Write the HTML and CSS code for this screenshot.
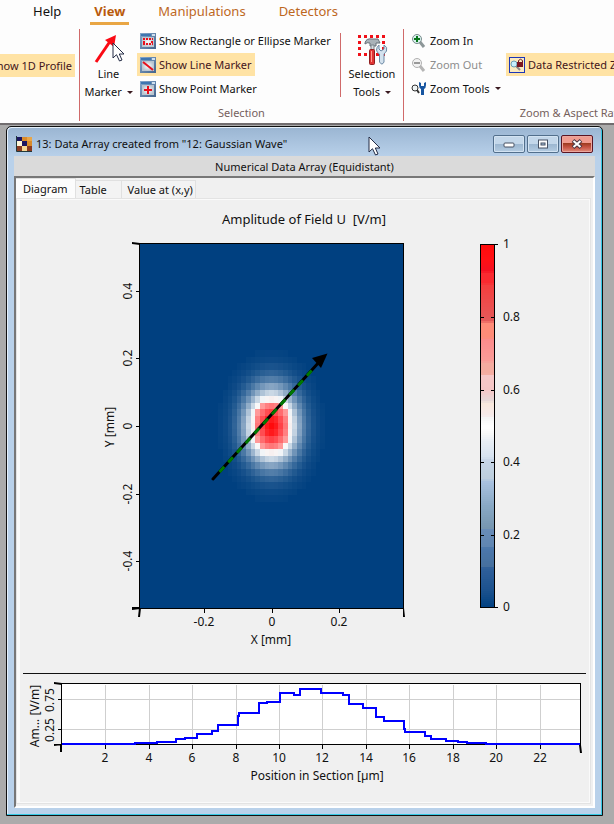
FILE: index.html
```html
<!DOCTYPE html>
<html lang="en">
<head>
<meta charset="utf-8">
<title>Data Array</title>
<link rel="stylesheet" href="styles.css">
</head>
<body>
<svg class="defs" aria-hidden="true">
  <defs>
    <linearGradient id="frame" x1="0" y1="0" x2="1" y2="1"><stop offset="0" stop-color="#86a8cc"/><stop offset="1" stop-color="#44648c"/></linearGradient>
    <radialGradient id="sheet"><stop offset="0" stop-color="#fff"/><stop offset="1" stop-color="#b9c4cf"/></radialGradient>
    <symbol id="pointer" viewBox="0 0 14 20"><path d="M1 1V16L4.5 12.7L7.5 19L10 18L7.3 12H12Z" fill="#fff" stroke="#222a44"/></symbol>
    <symbol id="marker-frame" viewBox="0 0 16 16"><rect width="16" height="16" fill="url(#frame)"/><rect x="1" y="1" width="10" height="2" fill="#3f76b0"/><rect x="12" y="1" width="3" height="2" fill="#cfe0f0"/><rect x="2" y="4" width="12" height="10" fill="url(#sheet)"/></symbol>
  </defs>
</svg>

<header class="ribbon">
  <nav class="tabs-bar">
    <a class="rtab help" href="#">Help</a>
    <a class="rtab active" href="#">View</a>
    <a class="rtab" href="#">Manipulations</a>
    <a class="rtab" href="#">Detectors</a>
  </nav>
  <div class="groups">
    <section class="group profile">
      <button class="cmd on">Show 1D Profile</button>
    </section>
    <section class="group selection">
      <div class="group-body">
        <button class="big line">
          <svg width="34" height="32" viewBox="0 0 34 32"><path d="M4 29L19 7" stroke="#fa0a14" stroke-width="3"/><path d="M13 7L24 2L22 14Z" fill="#fa0a14"/><use href="#pointer" x="20" y="9" width="14" height="20"/></svg>
          <span>Line<br>Marker <i class="caret"></i></span>
        </button>
        <div class="rows">
          <button class="cmd"><svg width="16" height="16"><use href="#marker-frame"/><path d="M3 6H13M3 11H13" stroke="#e8101c" stroke-width="2" stroke-dasharray="2 1"/><path d="M4 8V10M12 8V10" stroke="#e8101c" stroke-width="2"/></svg>Show Rectangle or Ellipse Marker</button>
          <button class="cmd on"><svg width="16" height="16"><use href="#marker-frame"/><path d="M3 5L13 13" stroke="#e8101c" stroke-width="2"/></svg>Show Line Marker</button>
          <button class="cmd"><svg width="16" height="16"><use href="#marker-frame"/><path d="M8 5V13M4 9H12" stroke="#e8101c" stroke-width="2"/></svg>Show Point Marker</button>
        </div>
        <button class="big tools">
          <svg width="34" height="32" viewBox="0 0 34 32"><path d="M3 3.500H31M3 21.500H31" stroke="#f01018" stroke-width="3" stroke-dasharray="3 3"/><path d="M4.500 8V20M28.500 8V20" stroke="#f01018" stroke-width="3" stroke-dasharray="3 3"/><path d="M10 10Q11 5 17 6L23 6L25 10L21 10V13H15V10Q12 9 10 11Z" fill="#a9b2b8" stroke="#667078"/><path d="M16 12H19V17H16Z" fill="#d5dce0" stroke="#78828a"/><rect x="14.500" y="16.500" width="5" height="15" rx="1" fill="#e03434" stroke="#8e1f20"/><path d="M16.500 18V29" stroke="#ff9c90"/><path d="M24 12V16L26 18L29 16V12Q33 14 31.500 18Q30 20 29 21V29Q27 33 24.500 29V21Q22 20 21.500 17Q21.500 14 24 12Z" fill="#d4e2ee" stroke="#6d8aa5"/></svg>
          <span>Selection<br>Tools <i class="caret"></i></span>
        </button>
      </div>
      <h2>Selection</h2>
    </section>
    <section class="group zoom">
      <div class="group-body">
        <div class="rows">
          <button class="cmd"><svg width="16" height="16"><circle cx="6" cy="6" r="4.500" fill="#d8f2ee" stroke="#7b8c8d"/><path d="M9 9L13 14" stroke="#8c9698" stroke-width="3"/><path d="M6 3V9M3 6H9" stroke="#08751b" stroke-width="2"/></svg>Zoom In</button>
          <button class="cmd" disabled><svg width="16" height="16"><circle cx="6" cy="6" r="4.500" fill="#f2f2f2" stroke="#b0b0b0"/><path d="M9 9L13 14" stroke="#b5b5b5" stroke-width="3"/><path d="M3 6H9" stroke="#999" stroke-width="2"/></svg>Zoom Out</button>
          <button class="cmd"><svg width="16" height="16"><circle cx="4" cy="7" r="3" fill="#eef4f4" stroke="#333"/><path d="M6 9L8 12" stroke="#333" stroke-width="2"/><path d="M8 1V4Q8 7 10 8V14H13V8Q15 7 15 4V1L13 2V5H10V2Z" fill="#1755a0"/></svg>Zoom Tools <i class="caret"></i></button>
        </div>
        <button class="cmd on restrict"><svg width="16" height="16"><rect x=".5" y=".5" width="15" height="15" fill="#fbeac0" stroke="#1c36b8"/><circle cx="5" cy="7" r="3" fill="#c8f0ff" stroke="#6a9db5"/><path d="M7 9L11 13" stroke="#888" stroke-width="2"/><path d="M9.500 6V3.500Q11.500 1 13.500 3.500V6" fill="none" stroke="#6a1820"/><rect x="8" y="5" width="6" height="5" fill="#7a1520"/></svg>Data Restricted Zoom</button>
      </div>
      <h2>Zoom &amp; Aspect Ratio</h2>
    </section>
  </div>
</header>

<main class="window">
  <div class="titlebar">
    <svg width="16" height="16" viewBox="0 0 16 16"><rect x="1" y="1" width="15" height="14" fill="#fff6d8"/><path d="M1 1H6V5H1ZM6 5H11V10H6Z" fill="#1c1660"/><path d="M6 1H11V5H6ZM11 5H16V10H11Z" fill="#d98b2b"/><path d="M11 1H16V5H11Z" fill="#e9a648"/><path d="M1 10H6V15H1ZM11 10H16V15H11Z" fill="#8b3a20"/><path d="M6 10H11V15H6Z" fill="#f5d795"/><path d="M.5 0V15.500H16" fill="none" stroke="#22383a"/></svg>
    <h1>13: Data Array created from "12: Gaussian Wave"</h1>
    <svg class="cursor" width="14" height="20"><use href="#pointer"/></svg>
    <div class="caption">
      <button aria-label="Minimize"><svg width="12" height="10"><rect x="1" y="4" width="10" height="4" rx="1" fill="#fff" stroke="#465163"/></svg></button>
      <button aria-label="Restore"><svg width="12" height="10"><rect x="1.500" y="1" width="9" height="8" fill="#fff" stroke="#465163"/><rect x="4" y="4" width="4" height="2" fill="#a9c4dd" stroke="#465163"/></svg></button>
      <button class="close" aria-label="Close"><svg width="12" height="10"><path d="M2 1.500L10 8.500M10 1.500L2 8.500" stroke="#4a3642" stroke-width="4"/><path d="M2.500 2L9.500 8M9.500 2L2.500 8" stroke="#fff" stroke-width="2"/></svg></button>
    </div>
  </div>
  <div class="subtitle">Numerical Data Array (Equidistant)</div>
  <div class="tabview">
    <div class="tabs" role="tablist">
      <button class="tab current" role="tab">Diagram</button>
      <button class="tab" role="tab">Table</button>
      <button class="tab value" role="tab">Value at (x,y)</button>
    </div>
    <div class="panel">
      <svg class="chart" viewBox="20 200 569 473" role="img" aria-label="Amplitude of Field U">
        <text class="chart-title" x="304" y="224" xml:space="preserve">Amplitude of Field U  [V/m]</text>
        <rect x="139" y="243" width="265" height="365" fill="#004080"/>
        <g id="field" shape-rendering="crispEdges"></g>
        <rect class="axis" x="139.500" y="243.500" width="264" height="365"/>
        <g id="field-axes"></g>
        <path d="M132 242L140 243V245L132 244ZM132 607H140V609L132 610ZM139 608H141L140 617H138ZM403 608H404L405 617H403Z"/>
        <text class="mid" x="271" y="644">X [mm]</text>
        <text class="mid" transform="translate(114 427) rotate(-90)">Y [mm]</text>
        <path d="M213 479L320 361" stroke="#000" stroke-width="3" stroke-linecap="round"/>
        <path d="M219.500 472L314 368" stroke="#007800" stroke-width="3" stroke-dasharray="7 6"/>
        <path d="M327.500 353.500L312 358L321 368Z"/>
        <g id="scale" shape-rendering="crispEdges"></g>
        <path class="axis" d="M498 244.500H480.500V607.500H498M494.500 244V608"/>
        <g id="scale-axis"></g>
      </svg>
      <hr>
      <svg class="chart" viewBox="20 674 569 128" role="img" aria-label="Profile along the line marker">
        <rect x="62" y="684" width="519" height="60" fill="#fff"/>
        <g id="profile-axes"></g>
        <path class="axis" d="M61.500 744.500V683.500H580.500V744.500Z"/>
        <path class="curve" d="M62 744H135V743H157V742H176V739H185V738H197V734H212V731H218V725H238V716H239V713H259V703H267V702H280V693H294V695H300V689H321V693H343V695H349V704H363V708H376V717H384V721H404V729H405V732H425V736H431V739H446V741H458V742H467V743H486V744H580"/>
        <path d="M54 682L62 683V685L54 684ZM54 744H62V745L54 746ZM60 745H62V752H60ZM579 745H581L582 753H580Z"/>
        <text class="mid" x="317" y="780">Position in Section [µm]</text>
        <text class="mid" transform="translate(39 716) rotate(-90)">Am... [V/m]</text>
      </svg>
    </div>
  </div>
</main>
<script src="script.js"></script>
</body>
</html>
```
FILE: styles.css
```css
* { box-sizing: border-box; }
body {
  margin: 0;
  min-height: 100vh;
  display: flex;
  flex-direction: column;
  background: #ababab;
  color: #111;
  font: 11px/16px "Noto Sans", "Open Sans", sans-serif;
}
button { font: inherit; color: inherit; border: 0; padding: 0; background: none; }
h1, h2 { margin: 0; font-size: 11px; font-weight: 400; }
svg { flex: none; }
.defs { position: absolute; width: 0; height: 0; }

.ribbon { background: #fdfdfd; border-bottom: 2px solid #716d6f; overflow: hidden; }
.tabs-bar { display: flex; height: 25px; padding-left: 29px; gap: 25px; font-size: 13px; }
.rtab { color: #bd681e; text-decoration: none; line-height: 22px; padding: 0 4px; }
.rtab.help { color: #111; }
.rtab.active { font-weight: 700; color: #b95a0c; border-bottom: 3px solid #e9a644; }
.groups { display: grid; grid-template-columns: 80px 324px 340px; height: 98px; padding: 4px 0; }
.group { display: flex; flex-direction: column; min-width: 0; border-right: 1px solid #d06a6a; }
.group h2 { text-align: center; color: #75605c; }
.group-body { display: flex; height: 76px; }
.profile { align-items: flex-end; padding: 25px 4px 0 0; overflow: hidden; }
.profile .cmd { padding-right: 3px; }
.cmd { display: flex; align-items: center; gap: 3px; height: 23px; padding: 0 3px; white-space: nowrap; }
.cmd.on { background: #ffe3a5; color: #43151c; }
.cmd:disabled { color: #8d8d8d; }
.rows { display: flex; flex-direction: column; align-items: flex-start; gap: 1px; }
.big { display: flex; flex-direction: column; align-items: center; padding-top: 4px; line-height: 18px; white-space: nowrap; }
.big.line { width: 57px; }
.big.tools { flex: 1; height: 64px; margin-top: 4px; padding-top: 0; border-left: 1px solid #d06a6a; }
.selection .rows { width: 203px; }
.caret { display: inline-block; margin-left: 2px; vertical-align: 2px; border: 3px solid transparent; border-top-color: #3a1a20; border-bottom: 0; }
.zoom .rows { width: 95px; padding-left: 4px; }
.restrict { margin-top: 24px; margin-left: 7px; flex: 1; }

.window {
  flex: 1;
  display: flex;
  flex-direction: column;
  margin: 1px 11px 8px 6px;
  padding: 0 7px 7px;
  border: 1px solid #111;
  border-radius: 5px 5px 0 0;
  background: linear-gradient(#9ab5d2, #b9d1ea 30px);
  box-shadow: inset -1px -1px #35c9e4, inset 1px 1px #e6f1fb;
}
.titlebar { position: relative; display: flex; align-items: center; gap: 4px; height: 29px; padding: 5px 2px 0; }
.titlebar h1 { flex: 1; white-space: nowrap; }
.cursor { position: absolute; left: 61%; top: 9px; }
.caption { display: flex; gap: 2px; align-self: center; }
.caption button {
  display: grid;
  place-items: center;
  width: 32px;
  height: 18px;
  border: 1px solid #526f8c;
  border-radius: 2px;
  background: linear-gradient(#c3d7ea 50%, #9bb6d0 50%, #b4cce2);
  box-shadow: inset 0 0 0 1px #d3e3f2;
}
.caption .close { border-color: #5b1422; background: linear-gradient(#f09c90 45%, #9b3a1e 45%, #c75444 70%, #e08c7c); box-shadow: inset 0 0 0 1px #eba79e; }
.subtitle { height: 20px; padding-top: 3px; background: #dadada; text-align: center; }
.tabview {
  flex: 1;
  display: flex;
  flex-direction: column;
  padding: 0 2px 2px 0;
  background: #f0f0f0;
  border: 2px solid;
  border-color: #777 #fff #fff #777;
}
.tabs { display: flex; align-items: flex-end; height: 20px; }
.tab { height: 18px; padding: 0 4px; border: 1px solid #e0e0e0; border-width: 1px 1px 0 0; text-align: left; line-height: 18px; background: #f3f3f3; min-width: 46px; }
.tab.current { height: 20px; min-width: 58px; padding: 0 7px; line-height: 19px; background: #fcfcfc; }
.tab.value { padding: 0 2px 0 6px; }
.panel { flex: 1; background: #f0f0f0; border: solid #fafafa; border-width: 2px 2px 2px 4px; outline: 1px solid #e3e3e3; outline-offset: -1px; }
.panel hr { height: 1px; margin: 0 3px; border: 0; background: #111; }

.chart { display: block; width: 100%; height: auto; }
.chart text { fill: #111; font-size: 12px; }
.chart .chart-title { font-size: 13px; text-anchor: middle; white-space: pre; }
.chart .tick { font-size: 12px; }
.chart .mid { text-anchor: middle; }
.axis { fill: none; stroke: #000; shape-rendering: crispEdges; }
.grid { stroke: #cfcfcf; shape-rendering: crispEdges; }
.curve { fill: none; stroke: #00f; stroke-width: 2; shape-rendering: crispEdges; }
```
FILE: script.js
```js
const NS = 'http://www.w3.org/2000/svg';
const stops = [
  [0, 0, 64, 128], [.05, 28, 82, 142], [.11, 48, 96, 154], [.115, 70, 112, 158], [.165, 76, 120, 172],
  [.17, 96, 134, 178], [.215, 104, 140, 184], [.22, 118, 150, 176], [.28, 136, 168, 196], [.35, 170, 194, 224],
  [.355, 188, 206, 220], [.41, 200, 214, 232], [.415, 214, 226, 240], [.46, 232, 238, 244], [.48, 248, 248, 248],
  [.5, 255, 255, 255], [.525, 244, 244, 244], [.53, 246, 234, 234], [.565, 248, 232, 220], [.57, 230, 216, 216],
  [.6, 244, 198, 198], [.64, 246, 200, 200], [.645, 244, 172, 160], [.675, 244, 172, 160], [.68, 250, 156, 152],
  [.74, 252, 140, 140], [.745, 255, 140, 120], [.785, 255, 140, 120], [.79, 228, 90, 90], [.89, 244, 62, 62],
  [.895, 250, 42, 48], [.92, 250, 42, 48], [.93, 245, 16, 32], [.96, 255, 16, 20], [1, 255, 12, 12]
];
const fieldStops = [
  [0, 0, 64, 128], [.46, 235, 240, 245], [.5, 250, 250, 250], [.6, 245, 232, 232], [.61, 255, 156, 156], [.85, 255, 70, 76], [1, 255, 10, 12]
];

function colour(v, table) {
  const i = Math.max(1, table.findIndex(s => s[0] >= v));
  const a = table[i - 1], b = table[i];
  const t = (v - a[0]) / (b[0] - a[0]);
  return `rgb(${[1, 2, 3].map(k => Math.round(a[k] + (b[k] - a[k]) * t)).join()})`;
}

function add(parent, tag, attrs, text) {
  const el = document.createElementNS(NS, tag);
  for (const k in attrs) el.setAttribute(k, attrs[k]);
  if (text !== undefined) el.textContent = text;
  document.getElementById(parent).append(el);
}

// Gaussian amplitude on the sampling grid
const cw = 264 / 57, ch = 364 / 55;
for (let r = -12; r <= 12; r++) {
  for (let c = -12; c <= 12; c++) {
    const v = Math.exp(-(r * r + c * c) / 27);
    if (v < .008) continue;
    const x = Math.round(271.5 + (c - .5) * cw), y = Math.round(426 + (r - .5) * ch);
    const x2 = Math.round(271.5 + (c + .5) * cw), y2 = Math.round(426 + (r + .5) * ch);
    add('field', 'rect', { x, y, width: x2 - x, height: y2 - y, fill: colour(v, fieldStops) });
  }
}
[['-0.2', 204], ['0', 272], ['0.2', 339]].forEach(([t, x]) => {
  add('field-axes', 'path', { class: 'axis', d: `M${x + .5} 609v4` });
  add('field-axes', 'text', { class: 'tick mid', x, y: 626 }, t);
});
[['0.4', 291], ['0.2', 358], ['0', 426], ['-0.2', 494], ['-0.4', 561]].forEach(([t, y]) => {
  add('field-axes', 'path', { class: 'axis', d: `M136 ${y + .5}h4` });
  add('field-axes', 'text', { class: 'tick mid', transform: `translate(132 ${y}) rotate(-90)` }, t);
});

// Colour scale
for (let y = 245; y < 607; y += 2) {
  add('scale', 'rect', { x: 481, y, width: 13, height: 2, fill: colour((607 - y) / 363, stops) });
}
[['1', 244], ['0.8', 317], ['0.6', 390], ['0.4', 462], ['0.2', 535], ['0', 607]].forEach(([t, y]) => {
  if (y > 244 && y < 607) add('scale-axis', 'path', { class: 'axis', d: `M481 ${y + .5}h3M491 ${y + .5}h4` });
  add('scale-axis', 'text', { class: 'tick', x: 503, y: y + 4 }, t);
});

// Profile axes
[106, 150, 193, 237, 280, 323, 367, 410, 454, 497, 541].forEach((x, i) => {
  add('profile-axes', 'path', { class: 'grid', d: `M${x - .5} 685V744` });
  add('profile-axes', 'path', { class: 'axis', d: `M${x - .5} 744v5` });
  add('profile-axes', 'text', { class: 'tick mid', x: x - 1, y: 762 }, 2 * (i + 1));
});
[['0.75', 699], ['0.25', 729]].forEach(([t, y]) => {
  add('profile-axes', 'path', { class: 'grid', d: `M62 ${y + .5}H580` });
  add('profile-axes', 'path', { class: 'axis', d: `M58 ${y + .5}h4` });
  add('profile-axes', 'text', { class: 'tick mid', transform: `translate(54 ${y + 1}) rotate(-90)` }, t);
});
```
